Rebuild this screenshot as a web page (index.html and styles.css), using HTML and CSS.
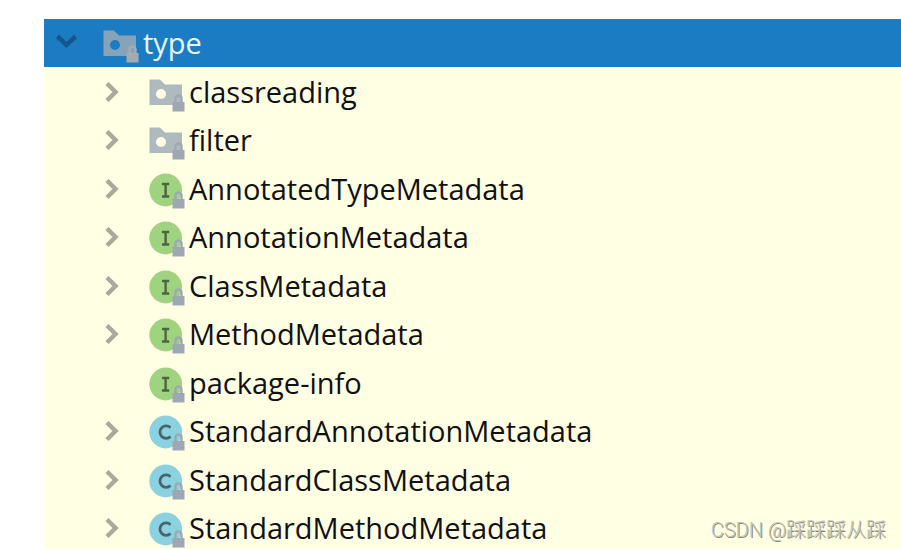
FILE: index.html
```html
<!DOCTYPE html>
<html lang="en">
<head>
<meta charset="utf-8">
<title>Project tree</title>
<link rel="stylesheet" href="styles.css">
</head>
<body>
<svg class="defs" aria-hidden="true">
  <symbol id="lock" viewBox="0 0 36 38">
    <path class="lock-loop" d="M26.500 29V25.500a3 3 0 0 1 6 0V29"/>
    <path class="lock-body" d="M23.500 29h12v9.500h-12z"/>
  </symbol>
  <symbol id="folder" viewBox="0 0 36 38">
    <path class="folder-shape" fill-rule="evenodd" d="M0.500 6.500H11l5 5H33V32H0.500zM12 16a5 5 0 1 0 0 10a5 5 0 1 0 0-10z"/>
    <use href="#lock"/>
  </symbol>
  <symbol id="interface" viewBox="0 0 36 38">
    <circle class="green" cx="16.700" cy="20" r="16.400"/>
    <path class="letter-i" d="M13 14h7.200M16.600 14v12.500M13 26.500h7.200"/>
    <use href="#lock"/>
  </symbol>
  <symbol id="class" viewBox="0 0 36 38">
    <circle class="cyan" cx="16.700" cy="20" r="16.400"/>
    <path class="letter-c" d="M21.500 15.700A6.200 6.200 0 1 0 21.500 24.500"/>
    <use href="#lock"/>
  </symbol>
  <symbol id="right" viewBox="0 0 22 22"><path class="chevron" d="M5 2.500l8.500 8.500l-8.500 8.500"/></symbol>
  <symbol id="down" viewBox="0 0 22 22"><path class="chevron" d="M1.500 4.500l9 8.500l9-8.500"/></symbol>
</svg>
<main class="tree">
  <div class="row selected"><button class="toggle" aria-label="Collapse type"><svg><use href="#down"/></svg></button><svg class="icon"><use href="#folder"/></svg><span class="name">type</span></div>
  <div class="row"><button class="toggle" aria-label="Expand classreading"><svg><use href="#right"/></svg></button><svg class="icon"><use href="#folder"/></svg><span class="name">classreading</span></div>
  <div class="row"><button class="toggle" aria-label="Expand filter"><svg><use href="#right"/></svg></button><svg class="icon"><use href="#folder"/></svg><span class="name">filter</span></div>
  <div class="row"><button class="toggle" aria-label="Expand AnnotatedTypeMetadata"><svg><use href="#right"/></svg></button><svg class="icon"><use href="#interface"/></svg><span class="name">AnnotatedTypeMetadata</span></div>
  <div class="row"><button class="toggle" aria-label="Expand AnnotationMetadata"><svg><use href="#right"/></svg></button><svg class="icon"><use href="#interface"/></svg><span class="name">AnnotationMetadata</span></div>
  <div class="row"><button class="toggle" aria-label="Expand ClassMetadata"><svg><use href="#right"/></svg></button><svg class="icon"><use href="#interface"/></svg><span class="name">ClassMetadata</span></div>
  <div class="row"><button class="toggle" aria-label="Expand MethodMetadata"><svg><use href="#right"/></svg></button><svg class="icon"><use href="#interface"/></svg><span class="name">MethodMetadata</span></div>
  <div class="row"><span class="toggle"></span><svg class="icon"><use href="#interface"/></svg><span class="name">package-info</span></div>
  <div class="row"><button class="toggle" aria-label="Expand StandardAnnotationMetadata"><svg><use href="#right"/></svg></button><svg class="icon"><use href="#class"/></svg><span class="name">StandardAnnotationMetadata</span></div>
  <div class="row"><button class="toggle" aria-label="Expand StandardClassMetadata"><svg><use href="#right"/></svg></button><svg class="icon"><use href="#class"/></svg><span class="name">StandardClassMetadata</span></div>
  <div class="row"><button class="toggle" aria-label="Expand StandardMethodMetadata"><svg><use href="#right"/></svg></button><svg class="icon"><use href="#class"/></svg><span class="name">StandardMethodMetadata</span></div>
  <div class="watermark">CSDN @踩踩踩从踩</div>
</main>
</body>
</html>
```
FILE: styles.css
```css
* { box-sizing: border-box; }
body {
  margin: 0;
  min-height: 100vh;
  overflow: hidden;
  background: #fff;
  font-family: "Open Sans", "Noto Sans", sans-serif;
  font-size: 29px;
  line-height: 40px;
  color: #111;
}
.defs { position: absolute; width: 0; height: 0; }
.tree {
  position: relative;
  margin: 19px 0 0 44px;
  height: calc(100vh - 19px);
  overflow: hidden;
  background: #ffffe4;
}
.row {
  display: flex;
  align-items: center;
  height: 48px;
  padding-left: 58px;
}
.row:nth-child(even) { height: 49px; }
.row.selected {
  padding-left: 12px;
  background: #1b7cc3;
  color: #e8f4fc;
}
.toggle {
  flex: none;
  width: 22px;
  height: 22px;
  margin-right: 25px;
  padding: 0;
  border: 0;
  background: none;
  color: #aaaa9a;
}
.selected .toggle { color: #15568a; }
.toggle svg { display: block; width: 22px; height: 22px; }
.icon {
  flex: none;
  width: 36px;
  height: 38px;
  margin-right: 4px;
  overflow: visible;
  color: #afbabf;
  --lock: #9da8b3;
}
.selected .icon { color: #86a3b8; --lock: #a3abb3; }
.chevron { fill: none; stroke: currentColor; stroke-width: 4.5; }
.folder-shape { fill: currentColor; }
.green { fill: #a0d37f; }
.cyan { fill: #8bd2e0; }
.letter-i { fill: none; stroke: #4c653f; stroke-width: 2.4; }
.letter-c { fill: none; stroke: #45646c; stroke-width: 2.8; }
.lock-loop { fill: none; stroke: var(--lock); stroke-width: 2.4; }
.lock-body { fill: var(--lock); }
symbol { overflow: visible; }
.name { white-space: nowrap; }
.watermark {
  position: absolute;
  right: 15px;
  bottom: 8px;
  font-family: Roboto, "Noto Sans CJK SC", sans-serif;
  font-size: 20px;
  font-weight: 300;
  line-height: 22px;
  color: #c4c4b6;
  text-shadow: 1px 1px 0 #88887e;
}
```
